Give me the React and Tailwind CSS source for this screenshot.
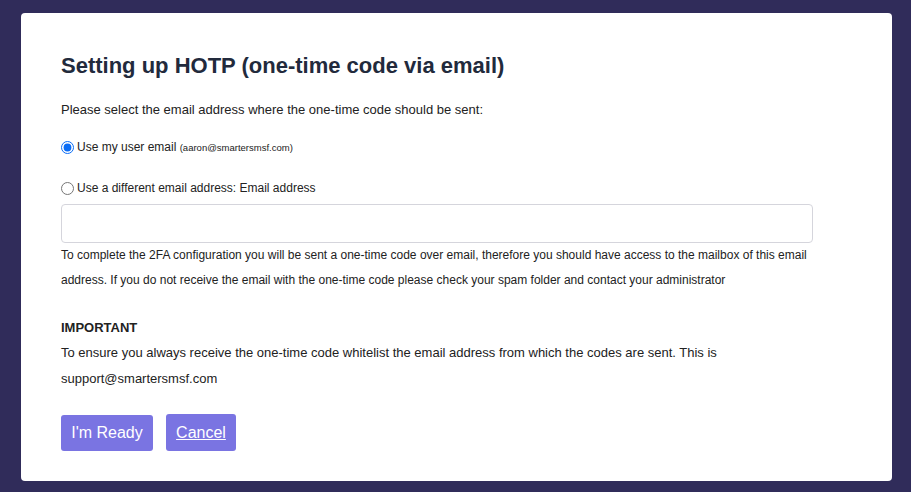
import React from "react";

export default function App() {
  return (
    <div className="min-h-[492px] w-full bg-[#302c5a] pt-[13px] pl-[21px] pr-[19px] pb-[11px] font-['Liberation_Sans',Arial,sans-serif]">
      <div className="h-[468px] rounded-[4px] bg-white px-10 pt-[38px]">
        <h1 className="text-[22px] font-bold leading-[30px] text-[#222a3c]">Setting up HOTP (one-time code via email)</h1>
        <p className="mt-[21px] text-[13px] leading-[16px] text-[#222]">Please select the email address where the one-time code should be sent:</p>

        <label className="mt-[22px] flex items-center text-[12px] leading-[14px] text-[#222]">
          <input type="radio" name="e" defaultChecked className="m-0 mr-[3px] h-[13px] w-[13px] accent-[#0a6cf5]" />
          <span>Use my user email <span className="text-[9.5px]">(aaron@smartersmsf.com)</span></span>
        </label>

        <label className="mt-[26px] flex items-center text-[12px] leading-[14px] text-[#222]">
          <input type="radio" name="e" className="m-0 mr-[3px] h-[13px] w-[13px]" />
          <span>Use a different email address: Email address</span>
        </label>

        <input type="text" className="mt-[9px] block h-[39px] w-[752px] rounded-[4px] border border-[#d5d5dc] bg-white px-2 outline-none" />

        <p className="mt-[0px] w-[752px] text-[12px] leading-[25px] text-[#222]">
          To complete the 2FA configuration you will be sent a one-time code over email, therefore you should have access to the mailbox of this email address. If you do not receive the email with the one-time code please check your spam folder and contact your administrator
        </p>

        <p className="mt-[23px] text-[13px] font-bold leading-[24px] text-[#222]">IMPORTANT</p>
        <p className="w-[752px] text-[13px] leading-[26px] text-[#222]">
          To ensure you always receive the one-time code whitelist the email address from which the codes are sent. This is support@smartersmsf.com
        </p>

        <div className="mt-[23px] flex gap-[13px]">
          <button className="h-[36px] w-[92px] rounded-[3px] bg-[#7a74e2] text-[16px] text-white">I'm Ready</button>
          <button className="h-[37px] w-[70px] -mt-[1px] rounded-[3px] bg-[#7a74e2] text-[16px] text-white underline">Cancel</button>
        </div>
      </div>
    </div>
  );
}
